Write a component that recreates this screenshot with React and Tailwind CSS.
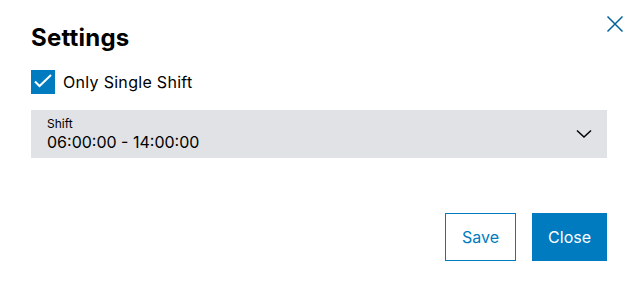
import React from "react";

export default function App() {
  return (
    <div
      className="relative w-[638px] h-[291px] bg-white text-black"
      style={{ fontFamily: 'Inter, "Noto Sans", sans-serif' }}
    >
      <button className="absolute left-[606px] top-[15px] w-[18px] h-[18px] flex items-center justify-center text-[#00629a]">
        <svg width="18" height="18" viewBox="0 0 18 18" fill="none" stroke="currentColor" strokeWidth="1.5">
          <path d="M1.5 1.5 L16.5 16.5 M16.5 1.5 L1.5 16.5" />
        </svg>
      </button>
      <div className="flex flex-col pl-[31px] pr-[31px] pt-[22px]">
        <h1 className="text-[24px] leading-[32px] font-bold tracking-[0.2px]">Settings</h1>
        <label className="mt-[16px] flex items-center gap-[8px] h-[24px]">
          <span className="w-[24px] h-[24px] bg-[#007bc0] flex items-center justify-center">
            <svg width="24" height="24" viewBox="0 0 24 24" fill="none" stroke="white" strokeWidth="2">
              <path d="M4 11.5 L8.5 16 L20 5" />
            </svg>
          </span>
          <span className="text-[16px] leading-[24px] tracking-[0.3px]">Only Single Shift</span>
        </label>
        <div className="mt-[16px] h-[48px] bg-[#e0e2e5] flex items-center justify-between pl-[16px] pr-[15px]">
          <div className="flex flex-col">
            <span className="text-[12px] leading-[16px]">Shift</span>
            <span className="text-[16px] leading-[20px]">06:00:00 - 14:00:00</span>
          </div>
          <svg width="16" height="16" viewBox="0 0 16 16" fill="none" stroke="#000" strokeWidth="1.5">
            <path d="M1 4.5 L8 11 L15 4.5" />
          </svg>
        </div>
        <div className="mt-[55px] flex justify-end gap-[16px]">
          <button className="h-[48px] px-[16px] border border-[#007bc0] text-[#007bc0] text-[16px] bg-white">
            Save
          </button>
          <button className="h-[48px] px-[16px] bg-[#007bc0] text-white text-[16px]">
            Close
          </button>
        </div>
      </div>
    </div>
  );
}
